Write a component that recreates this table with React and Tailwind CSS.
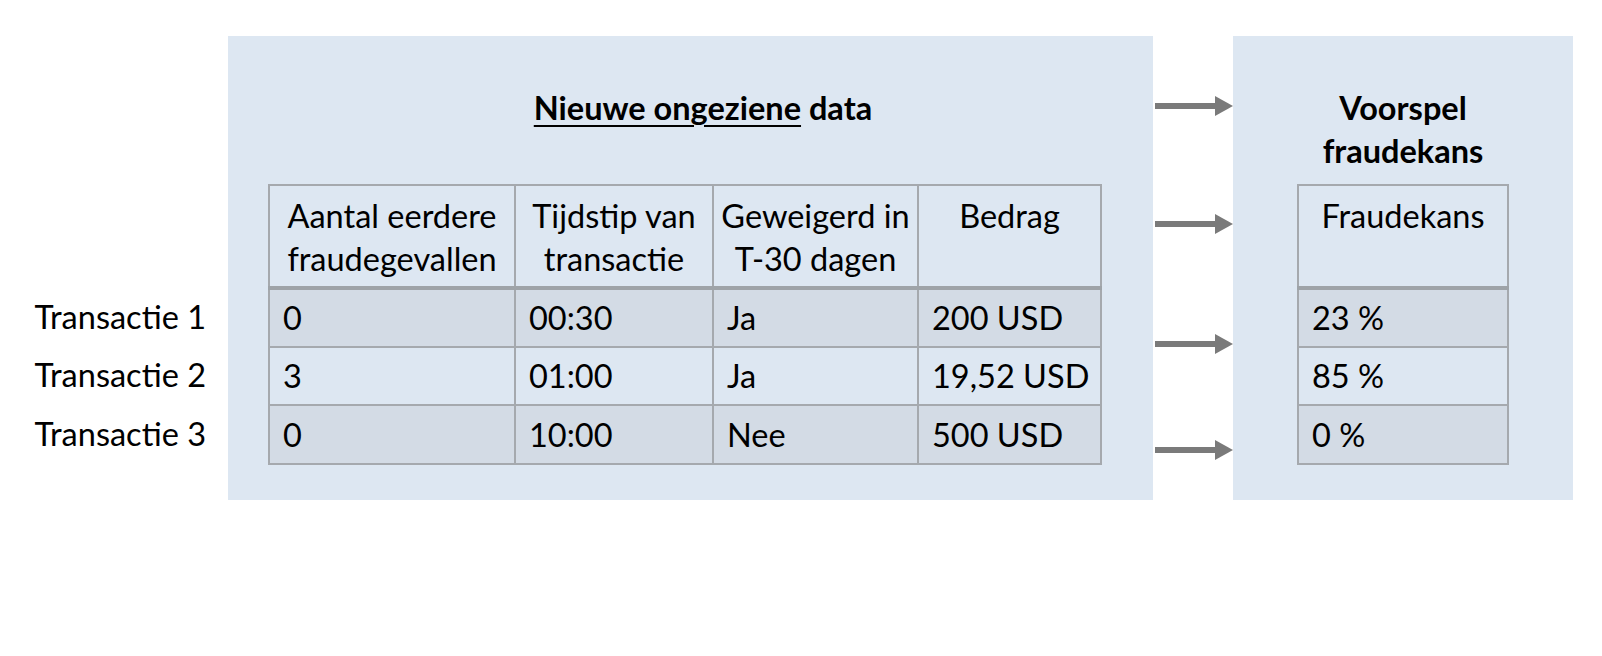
const rows = [
  { label: "Transactie 1", cells: ["0", "00:30", "Ja", "200 USD"], kans: "23 %", dark: true },
  { label: "Transactie 2", cells: ["3", "01:00", "Ja", "19,52 USD"], kans: "85 %", dark: false },
  { label: "Transactie 3", cells: ["0", "10:00", "Nee", "500 USD"], kans: "0 %", dark: true },
]

const headers = [
  ["Aantal eerdere", "fraudegevallen"],
  ["Tijdstip van", "transactie"],
  ["Geweigerd in", "T-30 dagen"],
  ["Bedrag"],
]

const Arrow = () => (
  <svg width="78" height="20" viewBox="0 0 78 20" className="block">
    <rect x="0" y="7" width="62" height="6" fill="#7a7a7a" />
    <polygon points="60,0 78,10 60,20" fill="#7a7a7a" />
  </svg>
)

export default function App() {
  return (
    <div
      className="w-[1602px] h-[656px] bg-white flex pt-[36px] text-black text-[32.5px] leading-[43px]"
      style={{ fontFamily: "Lato, 'Open Sans', sans-serif" }}
    >
      {/* row labels */}
      <div className="w-[228px] pt-[251px] flex flex-col items-end pr-[22px]">
        {rows.map((r) => (
          <div key={r.label} className="h-[58.5px] flex items-center">
            {r.label}
          </div>
        ))}
      </div>

      {/* new data panel */}
      <div className="w-[925px] h-[464px] bg-[#dde7f2] pt-[50px]">
        <div className="text-center pl-[25px] font-bold">
          <span className="underline decoration-2 underline-offset-[5px]">Nieuwe ongeziene</span> data
        </div>
        <table className="ml-[40px] mt-[55px] table-fixed w-[832px] border-collapse border-2 border-[#a5a9ae]">
          <colgroup>
            <col className="w-[246px]" />
            <col className="w-[198px]" />
            <col className="w-[205px]" />
            <col className="w-[183px]" />
          </colgroup>
          <thead>
            <tr className="h-[103px] border-b-4 border-[#9ea3a8]">
              {headers.map((h, i) => (
                <th key={i} className="font-normal align-top pt-[8px] border-2 border-[#a5a9ae] whitespace-nowrap">
                  {h[0]}
                  {h[1] && <br />}
                  {h[1]}
                </th>
              ))}
            </tr>
          </thead>
          <tbody>
            {rows.map((r) => (
              <tr key={r.label} className={`h-[58.5px] ${r.dark ? "bg-[#d3dbe5]" : "bg-[#dde7f2]"}`}>
                {r.cells.map((c, i) => (
                  <td key={i} className="pl-[13px] border-2 border-[#a5a9ae] whitespace-nowrap">
                    {c}
                  </td>
                ))}
              </tr>
            ))}
          </tbody>
        </table>
      </div>

      {/* arrows */}
      <div className="w-[80px] flex flex-col pl-[2px] pt-[60px]">
        <Arrow />
        <div className="mt-[98px]"><Arrow /></div>
        <div className="mt-[100px]"><Arrow /></div>
        <div className="mt-[86px]"><Arrow /></div>
      </div>

      {/* prediction panel */}
      <div className="w-[340px] h-[464px] bg-[#dde7f2] pt-[50px] flex flex-col items-center">
        <div className="font-bold text-center">
          Voorspel<br />fraudekans
        </div>
        <table className="mt-[12px] border-collapse border-2 border-[#a5a9ae] w-[212px]">
          <thead>
            <tr className="h-[103px] border-b-4 border-[#9ea3a8]">
              <th className="font-normal align-top pt-[8px] border-2 border-[#a5a9ae]">Fraudekans</th>
            </tr>
          </thead>
          <tbody>
            {rows.map((r) => (
              <tr key={r.label} className={`h-[58.5px] ${r.dark ? "bg-[#d3dbe5]" : "bg-[#dde7f2]"}`}>
                <td className="pl-[13px] border-2 border-[#a5a9ae]">{r.kans}</td>
              </tr>
            ))}
          </tbody>
        </table>
      </div>
    </div>
  )
}
